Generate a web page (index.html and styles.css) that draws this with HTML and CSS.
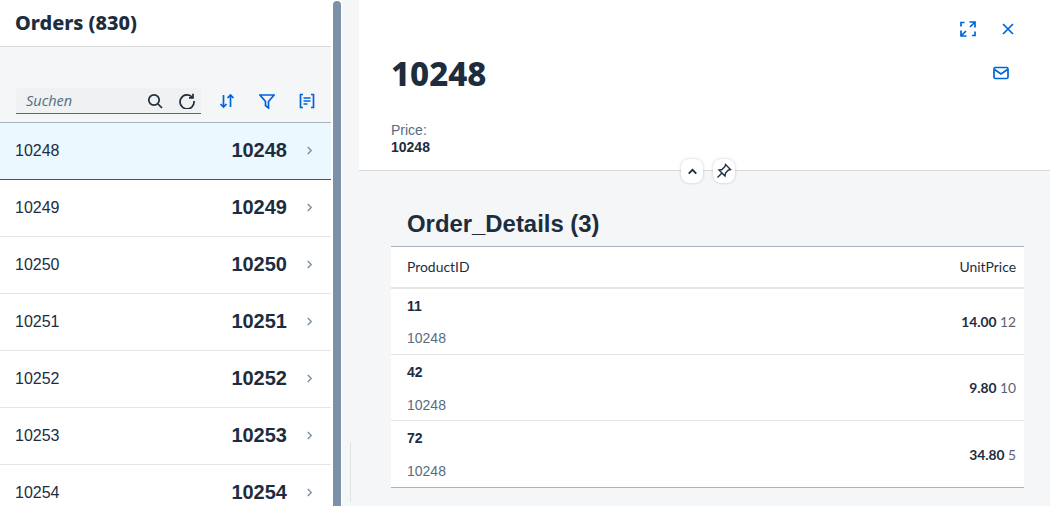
FILE: index.html
```html
<!DOCTYPE html>
<html lang="en">
<head>
  <meta charset="UTF-8">
  <meta name="viewport" content="width=device-width, initial-scale=1.0">
  <title>Orders</title>
  <link rel="stylesheet" href="styles.css">
</head>
<body>

  <div class="app">
    <section class="master">
      <div class="master-title">Orders (830)</div>
      <div class="toolbar">
        <div class="search">
          <span class="search-text">Suchen</span>
          <svg class="ico dark" viewBox="0 0 16 16"><circle cx="7" cy="7" r="5.2"/><path d="M11 11l4 4"/></svg>
          <svg class="ico dark" viewBox="0 0 16 16"><path d="M13.500 4.500A7 7 0 1 0 15 8"/><path d="M10 4.800h4V.8"/></svg>
        </div>
        <svg class="ico blue" viewBox="0 0 16 16"><path d="M4.500 2v12M1.500 11l3 3 3-3M11.500 14V2M8.500 5l3-3 3 3"/></svg>
        <svg class="ico blue" viewBox="0 0 16 16"><path d="M1 2h14L9.500 8.500V15L6.500 12.500v-4z"/></svg>
        <svg class="ico blue" viewBox="0 0 16 16"><path d="M4 1.500H1.500v13H4M12 1.500h2.500v13H12M4.500 5h7M4.500 8h7M4.500 11h4"/></svg>
      </div>
      <ul class="list">
        <li class="row selected"><span class="row-id">10248</span><b class="row-num">10248</b><svg class="chev" viewBox="0 0 8 10"><path d="M2 1l4 4-4 4"/></svg></li>
        <li class="row"><span class="row-id">10249</span><b class="row-num">10249</b><svg class="chev" viewBox="0 0 8 10"><path d="M2 1l4 4-4 4"/></svg></li>
        <li class="row"><span class="row-id">10250</span><b class="row-num">10250</b><svg class="chev" viewBox="0 0 8 10"><path d="M2 1l4 4-4 4"/></svg></li>
        <li class="row"><span class="row-id">10251</span><b class="row-num">10251</b><svg class="chev" viewBox="0 0 8 10"><path d="M2 1l4 4-4 4"/></svg></li>
        <li class="row"><span class="row-id">10252</span><b class="row-num">10252</b><svg class="chev" viewBox="0 0 8 10"><path d="M2 1l4 4-4 4"/></svg></li>
        <li class="row"><span class="row-id">10253</span><b class="row-num">10253</b><svg class="chev" viewBox="0 0 8 10"><path d="M2 1l4 4-4 4"/></svg></li>
        <li class="row"><span class="row-id">10254</span><b class="row-num">10254</b><svg class="chev" viewBox="0 0 8 10"><path d="M2 1l4 4-4 4"/></svg></li>
      </ul>
    </section>

    <div class="scrollbar"><div class="thumb"></div></div>

    <main class="detail">
      <div class="split-handle"></div>
      <header class="head">
        <div class="head-actions">
          <svg class="ico blue" viewBox="0 0 16 16"><path d="M1 5.500V1.500h3.500M12 14.500h3v-4M9.500 1h5.500v5.500M15 1L10 6M6.500 15H1V9.500M1 15l5-5"/></svg>
          <svg class="ico blue" viewBox="0 0 16 16"><path d="M3 3l10 10M13 3L3 13"/></svg>
        </div>
        <div class="head-main">
          <h1 class="head-title">10248</h1>
          <svg class="ico blue mail" viewBox="0 0 16 16"><rect x="1" y="2.500" width="14" height="11" rx="1.500"/><path d="M1.500 4.500L8 9l6.500-4.500"/></svg>
        </div>
        <div class="price-label">Price:</div>
        <div class="price-value">10248</div>
        <div class="head-tools">
          <button class="tool"><svg viewBox="0 0 12 12"><path d="M2.500 8L6 4.500 9.500 8"/></svg></button>
          <button class="tool"><svg class="pin" viewBox="0 0 16 16"><path d="M9.500 1.500l5 5-2 .5L9.500 10l-.5 3L3 7l3-.5L9 3.500zM5.500 10.500L1.500 14.500"/></svg></button>
        </div>
      </header>

      <section class="section">
        <h2 class="section-title">Order_Details (3)</h2>
        <div class="table">
          <div class="table-head"><span>ProductID</span><span>UnitPrice</span></div>
          <div class="item">
            <div><div class="item-id">11</div><div class="item-sub">10248</div></div>
            <div class="item-price"><b>14.00</b> <span>12</span></div>
          </div>
          <div class="item">
            <div><div class="item-id">42</div><div class="item-sub">10248</div></div>
            <div class="item-price"><b>9.80</b> <span>10</span></div>
          </div>
          <div class="item">
            <div><div class="item-id">72</div><div class="item-sub">10248</div></div>
            <div class="item-price"><b>34.80</b> <span>5</span></div>
          </div>
        </div>
      </section>
    </main>
  </div>

</body>
</html>
```

FILE: styles.css
```css
html, body {
  margin: 0;
  height: 100%;
  overflow: hidden;
}
body {
  font-family: "Liberation Sans", Arial, sans-serif;
  color: #1d2d3e;
  background-color: #f5f6f7;
}
.app {
  display: flex;
  height: 506px;
}
.ico {
  width: 16px;
  height: 16px;
  flex: none;
  fill: none;
  stroke-width: 1.7;
}
.ico.blue {
  stroke: #0064d9;
}
.ico.dark {
  stroke: #1d2d3e;
}

/* left list */
.master {
  width: 331px;
  flex: none;
  overflow: hidden;
}
.master-title {
  height: 47px;
  box-sizing: border-box;
  padding: 10px 15px 0;
  font-family: "Noto Sans", sans-serif;
  font-size: 19.9px;
  font-weight: 800;
  line-height: 26px;
  background-color: #fff;
  border-bottom: 1px solid #d9d9d9;
}
.toolbar {
  height: 76px;
  box-sizing: border-box;
  padding: 41px 14px 0 16px;
  display: flex;
  align-items: flex-start;
  gap: 24px;
  border-bottom: 1px solid #a8b3bd;
}
.toolbar .ico {
  margin-top: 5px;
}
.search {
  width: 185px;
  height: 26px;
  box-sizing: border-box;
  margin-right: -6px;
  padding: 0 6px 0 10px;
  display: flex;
  gap: 16px;
  background-color: #eff1f2;
  border-bottom: 1px solid #556b82;
  border-radius: 4px 4px 0 0;
}
.search-text {
  flex: 1;
  font-family: "Open Sans", sans-serif;
  font-size: 14.5px;
  font-style: italic;
  line-height: 26px;
  color: #556b82;
}
.list {
  margin: 0;
  padding: 0;
  list-style: none;
}
.row {
  height: 57px;
  box-sizing: border-box;
  padding: 0 18px 0 15px;
  display: flex;
  align-items: center;
  background-color: #fff;
  border-bottom: 1px solid #e5e5e5;
}
.row.selected {
  background-color: #ebf8ff;
  border-bottom-color: #0064d9;
}
.row-id {
  flex: 1;
  font-size: 16px;
}
.row-num {
  font-size: 20px;
  margin-right: 19px;
  margin-bottom: 2px;
}
.chev {
  width: 7px;
  height: 9px;
  margin-bottom: 2px;
  fill: none;
  stroke: #748ca3;
  stroke-width: 1.5;
}

.scrollbar {
  width: 11px;
  flex: none;
  box-sizing: border-box;
  padding: 1px 1px 0 2px;
  background-color: #fff;
}
.thumb {
  height: 100%;
  background-color: #7b91a8;
  border-radius: 4px 4px 0 0;
}

/* right detail */
.detail {
  position: relative;
  flex: 1;
  min-width: 0;
  padding-left: 17px;
}
.split-handle {
  position: absolute;
  left: 8px;
  top: 443px;
  width: 1px;
  height: 59px;
  background-color: #dfe2e5;
}
.head {
  position: relative;
  height: 171px;
  box-sizing: border-box;
  padding: 21px 34px 0 32px;
  background-color: #fff;
  border-bottom: 1px solid #d9d9d9;
}
.head-actions {
  display: flex;
  justify-content: flex-end;
  gap: 24px;
}
.head-main {
  display: flex;
  justify-content: space-between;
  margin-top: 19px;
  height: 66px;
}
.head-title {
  margin: 0;
  font-family: "Noto Sans", sans-serif;
  font-size: 33px;
  font-weight: 800;
  line-height: 36px;
}
.mail {
  margin-top: 9px;
  margin-right: 7px;
}
.price-label {
  font-size: 14px;
  line-height: 17px;
  color: #556b82;
}
.price-value {
  font-size: 14px;
  font-weight: 700;
  line-height: 17px;
}
.head-tools {
  position: absolute;
  left: 322px;
  bottom: -13px;
  display: flex;
  gap: 10px;
}
.tool {
  width: 22px;
  height: 24px;
  padding: 0;
  display: flex;
  align-items: center;
  justify-content: center;
  background-color: #fff;
  border: 0;
  border-radius: 8px;
  box-shadow: 0 0 3px rgba(85, 107, 130, 0.35);
}
.tool svg {
  width: 13px;
  height: 13px;
  fill: none;
  stroke: #1d2d3e;
  stroke-width: 1.7;
}
.tool .pin {
  width: 16px;
  height: 16px;
  stroke-width: 1.4;
}
.section {
  padding: 34px 26px 0 32px;
}
.section-title {
  margin: 0 0 3px;
  padding-left: 16px;
  font-size: 23.9px;
  font-weight: 700;
  line-height: 38px;
}
.table {
  background-color: #fff;
  border-top: 1px solid #a8b3bd;
  border-bottom: 1px solid #a8b3bd;
}
.table-head {
  height: 38px;
  padding: 0 8px 2px 16px;
  display: flex;
  align-items: center;
  justify-content: space-between;
  font-family: "Lato", sans-serif;
  font-size: 13.9px;
  border-bottom: 2px solid #e5e5e5;
}
.item {
  height: 65px;
  padding: 0 8px 0 16px;
  display: flex;
  align-items: center;
  justify-content: space-between;
  border-bottom: 1px solid #e5e5e5;
}
.item:last-child {
  height: 66px;
  border-bottom: 0;
}
.item-id {
  font-size: 14px;
  font-weight: 700;
  line-height: 20px;
}
.item-sub {
  margin-top: 12px;
  font-size: 14px;
  line-height: 20px;
  color: #5a6b7d;
}
.item + .item .item-sub {
  margin-top: 13px;
  margin-bottom: -1px;
}
.item-price {
  font-family: "Lato", sans-serif;
  font-size: 13.8px;
}
.item-price span {
  color: #5a6470;
}
```
